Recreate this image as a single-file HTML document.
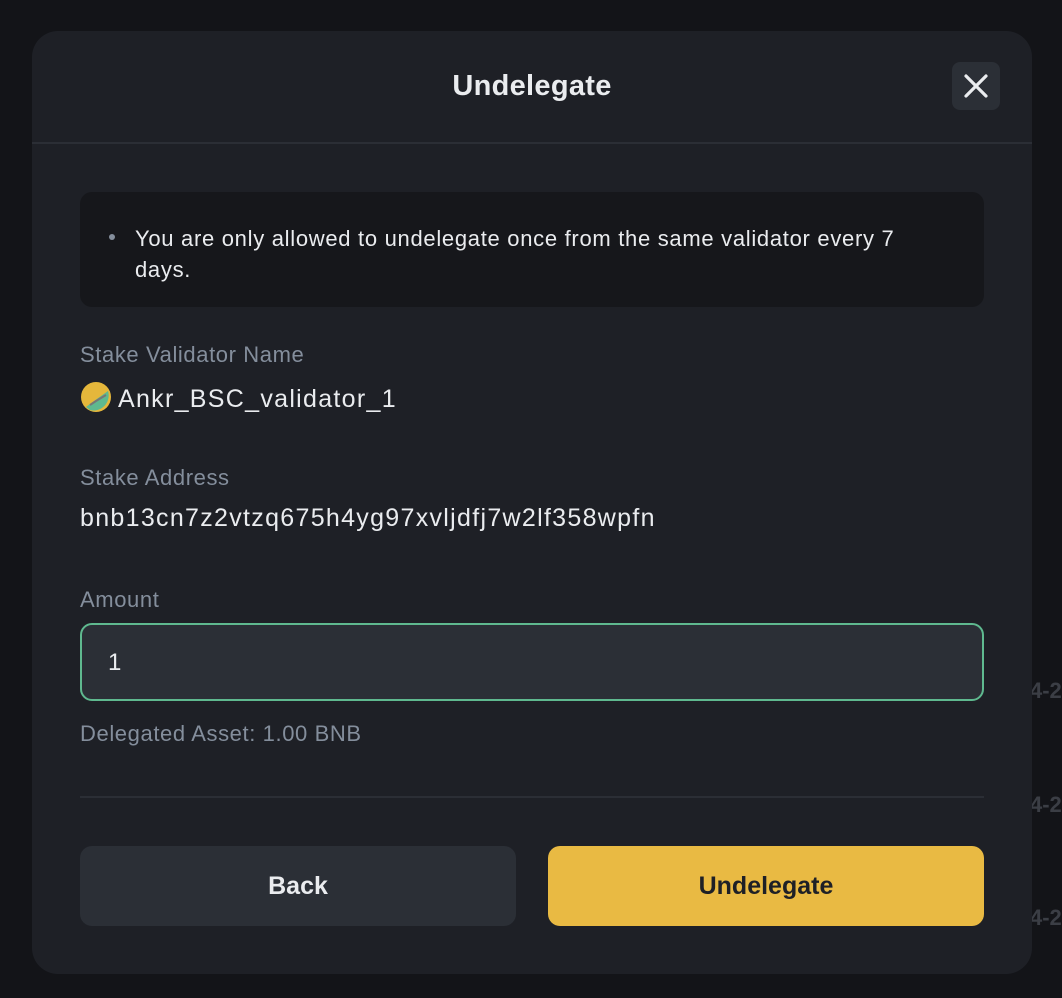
<!DOCTYPE html>
<html><head><style>
*{box-sizing:border-box;margin:0;padding:0}
body{width:1062px;height:998px;background:#131418;font-family:"Liberation Sans",sans-serif;position:relative;overflow:hidden}
.side{position:absolute;left:1030px;color:#3b3e45;font-size:22px;font-weight:bold}
.m{position:absolute;left:32px;top:31px;width:1000px;height:943px;background:#1e2026;border-radius:26px}
.t{position:absolute;top:39px;left:0;width:1000px;text-align:center;color:#eaecef;font-size:29px;font-weight:bold;letter-spacing:.3px}
.x{position:absolute;left:920px;top:31px;width:48px;height:48px;background:#2b2f36;border-radius:8px}
.hl{position:absolute;left:0;top:111px;width:1000px;height:2px;background:#2b2e35}
.al{position:absolute;left:48px;top:161px;width:904px;height:115px;background:#16171b;border-radius:12px;color:#eaecef;font-size:22px;letter-spacing:.7px;line-height:31px;padding:31px 40px 0 55px}
.al:before{content:"";position:absolute;left:29px;top:42px;width:6px;height:6px;border-radius:50%;background:#848e9c}
.lb{position:absolute;left:48px;color:#848e9c;font-size:22px;letter-spacing:.6px}
.v{position:absolute;left:48px;color:#eaecef;font-size:25px;letter-spacing:1.3px}
.in{position:absolute;left:48px;top:592px;width:904px;height:78px;background:#2b2f36;border:2px solid #5fb98f;border-radius:12px;color:#eaecef;font-size:24px;padding:24px 0 0 26px}
.dl{position:absolute;left:48px;top:765px;width:904px;height:2px;background:#2b2e35}
.b{position:absolute;top:815px;width:436px;height:80px;border-radius:12px;font-size:25px;font-weight:bold;text-align:center;line-height:80px}
</style></head><body>
<div class="side" style="top:678px">4-2</div>
<div class="side" style="top:792px">4-2</div>
<div class="side" style="top:905px">4-2</div>
<div class="m">
<div class="t">Undelegate</div>
<div class="x"><svg width="48" height="48"><path d="M14 14L34 34M34 14L14 34" stroke="#eaecef" stroke-width="3.2" stroke-linecap="round"/></svg></div>
<div class="hl"></div>
<div class="al">You are only allowed to undelegate once from the same validator every 7 days.</div>
<div class="lb" style="top:311px">Stake Validator Name</div>
<div class="v" style="top:350px;left:48px"><svg width="32" height="32" style="vertical-align:-6px;margin-right:6px"><circle cx="16" cy="16" r="15" fill="#e5b73b"/><path d="M6 26L14 20 28 10A15 15 0 0 1 10 29Z" fill="#5fb98f"/><path d="M10 24L16 20 26 14" stroke="#777" stroke-width="2" fill="none"/></svg>Ankr_BSC_validator_1</div>
<div class="lb" style="top:434px">Stake Address</div>
<div class="v" style="top:473px">bnb13cn7z2vtzq675h4yg97xvljdfj7w2lf358wpfn</div>
<div class="lb" style="top:556px">Amount</div>
<div class="in">1</div>
<div class="lb" style="top:690px">Delegated Asset: 1.00 BNB</div>
<div class="dl"></div>
<div class="b" style="left:48px;background:#2b2f36;color:#eaecef">Back</div>
<div class="b" style="left:516px;background:#e9ba43;color:#1e2026">Undelegate</div>
</div>
</body></html>
